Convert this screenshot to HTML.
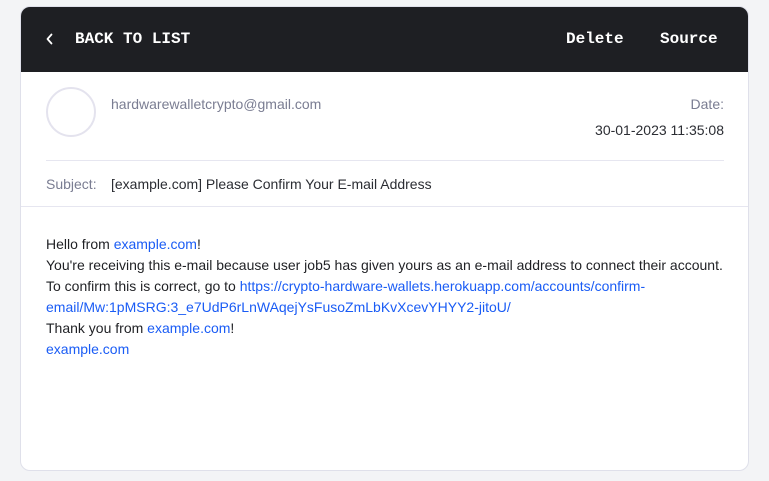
<!DOCTYPE html>
<html><head><style>
*{box-sizing:border-box;margin:0;padding:0}
body{width:769px;height:481px;background:#f3f4f6;font-family:"Liberation Sans",sans-serif;overflow:hidden;position:relative}
.card{position:absolute;left:20px;top:6px;width:729px;height:465px;background:#fff;border:1px solid #dfe0ea;border-radius:10px;overflow:hidden}
.hd{position:absolute;left:-1px;top:-1px;width:729px;height:66px;background:#1e1f23;color:#fff;font-family:"Liberation Mono",monospace;font-weight:bold;font-size:16px}
.hd span{position:absolute;top:24px}
.av{position:absolute;left:25px;top:80px;width:50px;height:50px;border:2px solid #e4e3ee;border-radius:50%}
.g{color:#7a7d92;font-size:14px;position:absolute}
.d{color:#2b2d33;font-size:14px;position:absolute}
.line{position:absolute;background:#e6e6f0;height:1px}
.body{position:absolute;left:25px;top:227px;font-size:14px;line-height:21px;color:#1f2024}
a{color:#1a5cf5;text-decoration:none}
</style></head><body>
<div class="card">
<div class="hd"><svg style="position:absolute;left:25px;top:26px" width="10" height="14" viewBox="0 0 10 14"><path d="M6.5 2.5 L2.5 7 L6.5 11.5" fill="none" stroke="#fff" stroke-width="1.8" stroke-linecap="round" stroke-linejoin="round"/></svg><span style="left:55px">BACK TO LIST</span><span style="left:546px">Delete</span><span style="left:640px">Source</span></div>
<div class="av"></div>
<div class="g" style="left:90px;top:89px">hardwarewalletcrypto@gmail.com</div>
<div class="g" style="right:24px;top:89px">Date:</div>
<div class="d" style="right:24px;top:115px">30-01-2023 11:35:08</div>
<div class="line" style="left:25px;width:678px;top:153px"></div>
<div class="g" style="left:25px;top:169px">Subject:</div>
<div class="d" style="left:90px;top:169px">[example.com] Please Confirm Your E-mail Address</div>
<div class="line" style="left:0;width:729px;top:199px"></div>
<div class="body">Hello from <a>example.com</a>!<br>You're receiving this e-mail because user job5 has given yours as an e-mail address to connect their account.<br>To confirm this is correct, go to <a>https://crypto-hardware-wallets.herokuapp.com/accounts/confirm-<br>email/Mw:1pMSRG:3_e7UdP6rLnWAqejYsFusoZmLbKvXcevYHYY2-jitoU/</a><br>Thank you from <a>example.com</a>!<br><a>example.com</a></div>
</div>
</body></html>
